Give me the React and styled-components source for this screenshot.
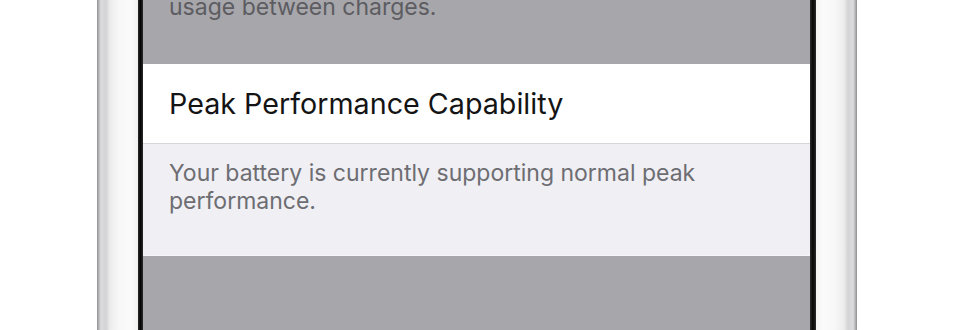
import styled, { createGlobalStyle } from 'styled-components';

const GlobalStyle = createGlobalStyle`
  html, body {
    margin: 0;
    padding: 0;
    background: #ffffff;
  }
`;

const Page = styled.div`
  width: 960px;
  height: 330px;
  display: flex;
  background: #ffffff;
  overflow: hidden;
  font-family: Inter, 'Liberation Sans', sans-serif;
`;

const Gutter = styled.div`
  width: ${(props) => props.size}px;
  flex-shrink: 0;
`;

const FrameEdge = styled.div`
  width: 41px;
  flex-shrink: 0;
  background: linear-gradient(
    ${(props) => (props.flip ? 'to left' : 'to right')},
    #8f8f92 0,
    #b9b9bb 2px,
    #dcdcdd 4px,
    #d3d3d5 9px,
    #ececed 13px,
    #f7f7f7 22px,
    #fbfbfb 34px,
    #f1f1f2 41px
  );
`;

const Bezel = styled.div`
  width: ${(props) => props.size}px;
  flex-shrink: 0;
  background: linear-gradient(to right, #2a2a2a, #050505, #2a2a2a);
`;

const Screen = styled.div`
  width: 667px;
  flex-shrink: 0;
  display: flex;
  flex-direction: column;
`;

const DimTop = styled.div`
  height: 64px;
  background: #a7a6ab;
  display: flex;
  flex-direction: column;
  justify-content: flex-end;
  padding: 0 0 43px 26px;
  box-sizing: border-box;
  overflow: hidden;
`;

const DimText = styled.div`
  font-size: 23px;
  line-height: 28px;
  color: #5c5c61;
`;

const Cell = styled.div`
  height: 79px;
  background: #ffffff;
  display: flex;
  align-items: center;
  padding-left: 26px;
  font-size: 28.7px;
  color: #141414;
  border-bottom: 1px solid #d6d6da;
`;

const Footer = styled.div`
  height: 112px;
  box-sizing: border-box;
  background: #efeff4;
  padding: 15px 0 0 26px;
  border-bottom: 1px solid #f6f6f9;
`;

const FooterText = styled.p`
  margin: 0;
  max-width: 560px;
  font-size: 23px;
  line-height: 28px;
  color: #6d6d72;
`;

const DimBottom = styled.div`
  flex: 1;
  background: #a7a6ab;
`;

export default function App() {
  return (
    <>
      <GlobalStyle />
      <Page>
        <Gutter size={97} />
        <FrameEdge />
        <Bezel size={5} />
        <Screen>
          <DimTop>
            <DimText>usage between charges.</DimText>
          </DimTop>
          <Cell>Peak Performance Capability</Cell>
          <Footer>
            <FooterText>
              Your battery is currently supporting normal peak performance.
            </FooterText>
          </Footer>
          <DimBottom />
        </Screen>
        <Bezel size={6} />
        <FrameEdge flip />
        <Gutter size={103} />
      </Page>
    </>
  );
}
